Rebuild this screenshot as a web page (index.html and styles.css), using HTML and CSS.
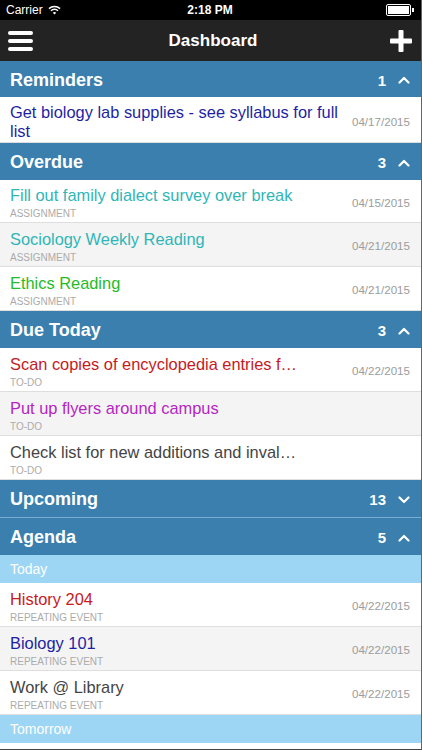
FILE: index.html
```html
<!DOCTYPE html>
<html lang="en">
<head>
    <meta charset="UTF-8">
    <title>Dashboard</title>
    <link rel="stylesheet" href="styles.css">
</head>
<body>
    <div id="screen">
        <div class="statusbar">
            <div class="status-left">
                <span>Carrier</span>
                <svg class="wifi" width="13" height="10" viewBox="0 0 13 10">
                    <path d="M1 3.6 A8 8 0 0 1 12 3.6" fill="none" stroke="#fff" stroke-width="1.5"/>
                    <path d="M3 5.8 A5 5 0 0 1 10 5.8" fill="none" stroke="#fff" stroke-width="1.5"/>
                    <path d="M6.5 9.5 L4.8 7.8 A2.4 2.4 0 0 1 8.2 7.8 Z" fill="#fff"/>
                </svg>
            </div>
            <div class="status-time">2:18 PM</div>
            <div class="status-right">
                <div class="battery"><div class="battery-fill"></div></div>
                <div class="battery-nub"></div>
            </div>
        </div>

        <div class="navbar">
            <div class="hamburger">
                <span></span><span></span><span></span>
            </div>
            <div class="nav-title">Dashboard</div>
            <svg class="plus" width="22" height="22" viewBox="0 0 22 22">
                <rect x="8.5" y="0" width="5" height="22" rx="1" fill="#fff"/>
                <rect x="0" y="8.5" width="22" height="5" rx="1" fill="#fff"/>
            </svg>
        </div>

        <div id="list">
            <div class="section-head first">
                <span class="section-name">Reminders</span>
                <span class="section-count">1</span>
                <svg class="chev" width="12" height="8" viewBox="0 0 12 8"><path d="M1.5 6.5 L6 2 L10.5 6.5" fill="none" stroke="#fff" stroke-width="2.2" stroke-linecap="round" stroke-linejoin="round"/></svg>
            </div>
            <div class="row reminder">
                <div class="row-main">
                    <div class="row-title c-navy">Get biology lab supplies - see syllabus for full list</div>
                </div>
                <div class="row-date">04/17/2015</div>
            </div>

            <div class="section-head">
                <span class="section-name">Overdue</span>
                <span class="section-count">3</span>
                <svg class="chev" width="12" height="8" viewBox="0 0 12 8"><path d="M1.5 6.5 L6 2 L10.5 6.5" fill="none" stroke="#fff" stroke-width="2.2" stroke-linecap="round" stroke-linejoin="round"/></svg>
            </div>
            <div class="row short">
                <div class="row-main">
                    <div class="row-title c-teal">Fill out family dialect survey over break</div>
                    <div class="row-type">ASSIGNMENT</div>
                </div>
                <div class="row-date">04/15/2015</div>
            </div>
            <div class="row alt">
                <div class="row-main">
                    <div class="row-title c-teal">Sociology Weekly Reading</div>
                    <div class="row-type">ASSIGNMENT</div>
                </div>
                <div class="row-date">04/21/2015</div>
            </div>
            <div class="row">
                <div class="row-main">
                    <div class="row-title c-green">Ethics Reading</div>
                    <div class="row-type">ASSIGNMENT</div>
                </div>
                <div class="row-date">04/21/2015</div>
            </div>

            <div class="section-head">
                <span class="section-name">Due Today</span>
                <span class="section-count">3</span>
                <svg class="chev" width="12" height="8" viewBox="0 0 12 8"><path d="M1.5 6.5 L6 2 L10.5 6.5" fill="none" stroke="#fff" stroke-width="2.2" stroke-linecap="round" stroke-linejoin="round"/></svg>
            </div>
            <div class="row">
                <div class="row-main">
                    <div class="row-title c-red">Scan copies of encyclopedia entries f…</div>
                    <div class="row-type">TO-DO</div>
                </div>
                <div class="row-date">04/22/2015</div>
            </div>
            <div class="row alt">
                <div class="row-main">
                    <div class="row-title c-magenta">Put up flyers around campus</div>
                    <div class="row-type">TO-DO</div>
                </div>
                <div class="row-date"></div>
            </div>
            <div class="row">
                <div class="row-main">
                    <div class="row-title c-gray">Check list for new additions and inval…</div>
                    <div class="row-type">TO-DO</div>
                </div>
                <div class="row-date"></div>
            </div>

            <div class="section-head">
                <span class="section-name">Upcoming</span>
                <span class="section-count">13</span>
                <svg class="chev" width="12" height="8" viewBox="0 0 12 8"><path d="M1.5 1.5 L6 6 L10.5 1.5" fill="none" stroke="#fff" stroke-width="2.2" stroke-linecap="round" stroke-linejoin="round"/></svg>
            </div>
            <div class="section-head joined">
                <span class="section-name">Agenda</span>
                <span class="section-count">5</span>
                <svg class="chev" width="12" height="8" viewBox="0 0 12 8"><path d="M1.5 6.5 L6 2 L10.5 6.5" fill="none" stroke="#fff" stroke-width="2.2" stroke-linecap="round" stroke-linejoin="round"/></svg>
            </div>
            <div class="sub-head">Today</div>
            <div class="row">
                <div class="row-main">
                    <div class="row-title c-red">History 204</div>
                    <div class="row-type">REPEATING EVENT</div>
                </div>
                <div class="row-date">04/22/2015</div>
            </div>
            <div class="row alt">
                <div class="row-main">
                    <div class="row-title c-navy">Biology 101</div>
                    <div class="row-type">REPEATING EVENT</div>
                </div>
                <div class="row-date">04/22/2015</div>
            </div>
            <div class="row">
                <div class="row-main">
                    <div class="row-title c-gray">Work @ Library</div>
                    <div class="row-type">REPEATING EVENT</div>
                </div>
                <div class="row-date">04/22/2015</div>
            </div>
            <div class="sub-head">Tomorrow</div>
        </div>
    </div>
</body>
</html>
```

FILE: styles.css
```css
body {
    margin: 0;
    padding: 0;
    background-color: #fff;
    font-family: "Liberation Sans", Arial, sans-serif;
}

#screen {
    width: 422px;
    height: 750px;
    overflow: hidden;
    box-sizing: border-box;
    border-right: 1px solid #666;
    border-bottom: 1px solid #444;
}

.statusbar {
    height: 20px;
    background-color: #000;
    color: #fff;
    font-size: 12px;
    display: flex;
    align-items: center;
    justify-content: space-between;
    padding: 0 7px 0 6px;
}

.status-left {
    display: flex;
    align-items: center;
    gap: 5px;
    width: 100px;
}

.status-time {
    font-weight: bold;
}

.status-right {
    width: 100px;
    display: flex;
    justify-content: flex-end;
    align-items: center;
}

.battery {
    width: 21px;
    height: 8px;
    border: 1px solid #fff;
    border-radius: 2px;
    padding: 1px;
}

.battery-fill {
    width: 100%;
    height: 100%;
    background-color: #fff;
}

.battery-nub {
    width: 2px;
    height: 4px;
    background-color: #fff;
    margin-left: 1px;
}

.navbar {
    height: 41px;
    background-color: #232323;
    display: flex;
    align-items: center;
    justify-content: space-between;
    padding: 1px 9px 0 8px;
    box-sizing: border-box;
}

.hamburger {
    width: 25px;
    display: flex;
    flex-direction: column;
    gap: 4px;
}

.hamburger span {
    display: block;
    height: 4px;
    background-color: #fff;
    border-radius: 2px;
}

.nav-title {
    color: #fff;
    font-size: 17px;
    font-weight: bold;
    margin-left: 3px;
}

.section-head {
    height: 37px;
    background-color: #3a7fad;
    color: #fff;
    display: flex;
    align-items: center;
    padding: 2px 11px 0 10px;
    box-sizing: border-box;
}

.section-head.first {
    height: 36px;
}

.section-head.joined {
    border-top: 1px solid #78aed4;
    height: 38px;
}

.section-name {
    flex: 1;
    font-size: 18px;
    font-weight: bold;
}

.section-count {
    font-size: 15px;
    font-weight: bold;
    margin-right: 12px;
}

.chev {
    display: block;
}

.row {
    height: 44px;
    box-sizing: border-box;
    border-bottom: 1px solid #dedede;
    display: flex;
    align-items: center;
    padding: 0 11px 0 10px;
    background-color: #fff;
}

.row.alt {
    background-color: #f4f4f4;
}

.row.short {
    height: 43px;
}

.row.reminder {
    height: 46px;
    align-items: flex-start;
    padding-top: 6px;
}

.row.reminder .row-main {
    padding-top: 0;
}

.row.reminder .row-date {
    margin-top: 10px;
}

.row-main {
    flex: 1;
    min-width: 0;
    padding-top: 4px;
}

.row-title {
    font-size: 16.4px;
    line-height: 19px;
    white-space: nowrap;
}

.reminder .row-title {
    white-space: normal;
    width: 335px;
}

.row-type {
    font-size: 10px;
    line-height: 12px;
    color: #ababab;
    margin-top: 3px;
}

.row-date {
    font-size: 11.6px;
    color: #9c9c9c;
    padding-top: 2px;
}

.sub-head {
    height: 28px;
    background-color: #9dd5f4;
    color: #fff;
    font-size: 14px;
    display: flex;
    align-items: center;
    padding-left: 10px;
}

.c-navy { color: #1f1fa3; }
.c-teal { color: #2fb6b8; }
.c-green { color: #26bb2a; }
.c-red { color: #c51a1e; }
.c-magenta { color: #b426c2; }
.c-gray { color: #444; }
```
